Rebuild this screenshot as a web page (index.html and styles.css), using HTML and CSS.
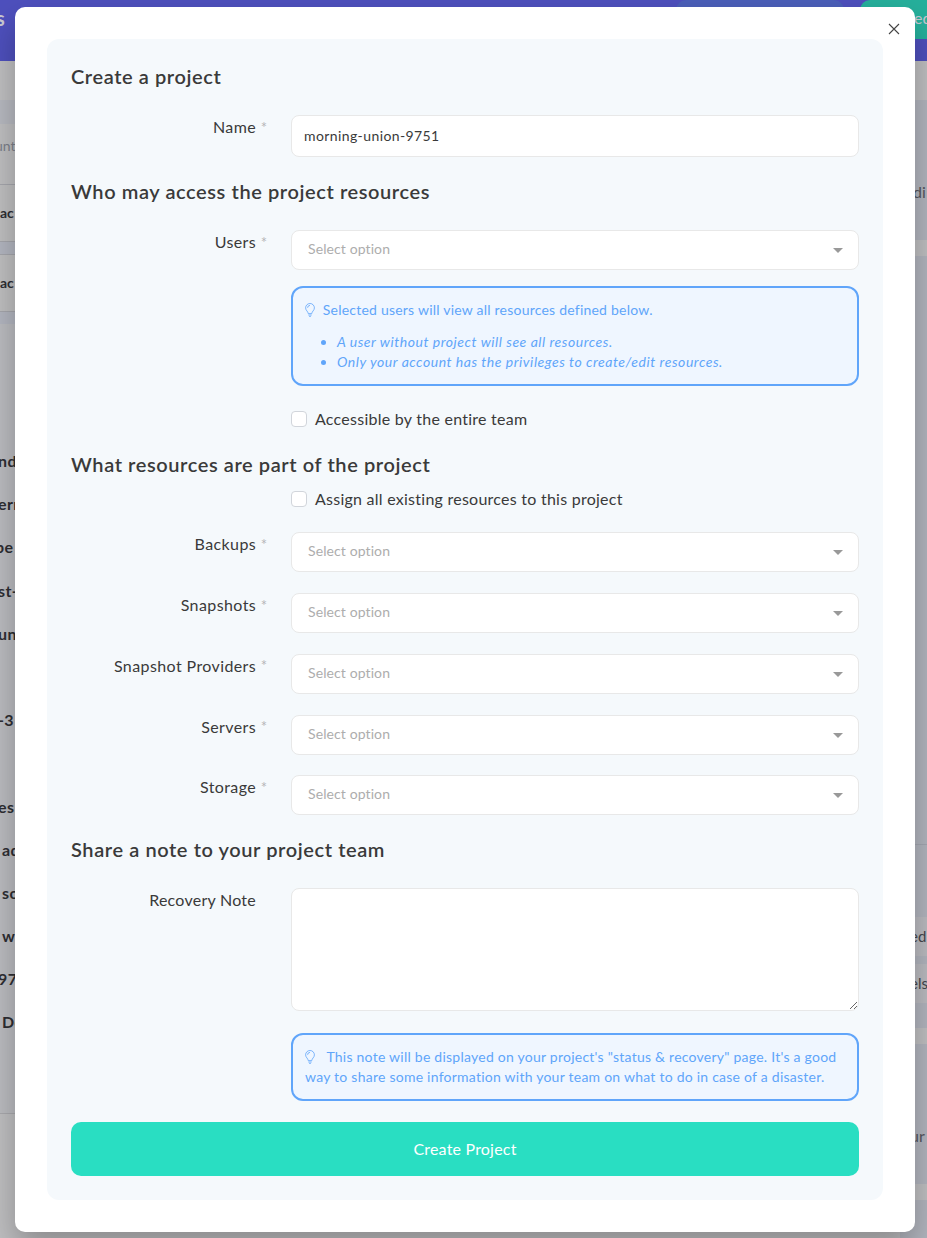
FILE: index.html
```html
<!DOCTYPE html>
<html lang="en">
<head>
    <meta charset="utf-8">
    <title>Create a project</title>
    <link rel="stylesheet" href="styles.css">
</head>
<body>
    <div class="page">
        <header class="topbar">
            <span class="brand">s</span>
            <span class="search"></span>
            <span class="connect">ed</span>
        </header>
        <div class="content">
            <div class="list">
                <div class="list-space"></div>
                <div class="list-filter">unt</div>
                <div class="cards">
                    <div class="card">ac</div>
                    <div class="card">ac</div>
                </div>
                <div class="rows">
                    <span>nd</span>
                    <span>err</span>
                    <span class="cut">pe</span>
                    <span>st-</span>
                    <span>un</span>
                    <span></span>
                    <span>-3</span>
                    <span></span>
                    <span>es</span>
                    <span class="indent">ad</span>
                    <span class="indent">so</span>
                    <span class="indent">w</span>
                    <span>97</span>
                    <span class="indent">De</span>
                </div>
            </div>
            <div class="side">
                <div class="side-box side-intro">di</div>
                <div class="side-box side-main">
                    <div class="side-links">
                        <span>ed</span>
                        <span>els</span>
                    </div>
                </div>
                <div class="side-box side-help">ur</div>
                <div class="side-box side-last"></div>
            </div>
        </div>
    </div>

    <div class="modal">
        <button class="close" aria-label="Close">
            <svg width="12" height="12" viewBox="0 0 12 12"><path d="M1 1l10 10M11 1L1 11"/></svg>
        </button>
        <form class="panel">
            <h2>Create a project</h2>
            <div class="row">
                <label for="name">Name <sup>*</sup></label>
                <input type="text" id="name" value="morning-union-9751">
            </div>

            <h2>Who may access the project resources</h2>
            <div class="row">
                <label>Users <sup>*</sup></label>
                <div>
                    <div class="select">Select option</div>
                    <div class="info info-users">
                        <p>
                            <svg class="bulb" width="10" height="14" viewBox="0 0 10 14"><path d="M3.2 10.6C3.2 8.5.6 7.5.6 4.9a4.4 4.4 0 0 1 8.8 0c0 2.6-2.6 3.6-2.6 5.7zM3.3 12h3.4M4.1 13.4h1.8M2.6 4.8A2.4 2.4 0 0 1 5 2.4"/></svg>
                            <span>Selected users will view all resources defined below.</span>
                        </p>
                        <ul>
                            <li>A user without project will see all resources.</li>
                            <li>Only your account has the privileges to create/edit resources.</li>
                        </ul>
                    </div>
                    <label class="check check-team"><input type="checkbox"> <span>Accessible by the entire team</span></label>
                </div>
            </div>

            <h2 class="tight">What resources are part of the project</h2>
            <div class="row row-assign">
                <span></span>
                <label class="check"><input type="checkbox"> <span>Assign all existing resources to this project</span></label>
            </div>
            <div class="row">
                <label>Backups <sup>*</sup></label>
                <div class="select">Select option</div>
            </div>
            <div class="row">
                <label>Snapshots <sup>*</sup></label>
                <div class="select">Select option</div>
            </div>
            <div class="row">
                <label>Snapshot Providers <sup>*</sup></label>
                <div class="select">Select option</div>
            </div>
            <div class="row">
                <label>Servers <sup>*</sup></label>
                <div class="select">Select option</div>
            </div>
            <div class="row">
                <label>Storage <sup>*</sup></label>
                <div class="select">Select option</div>
            </div>

            <h2>Share a note to your project team</h2>
            <div class="row">
                <label class="optional" for="note">Recovery Note</label>
                <div>
                    <textarea id="note"></textarea>
                    <div class="info info-note">
                        <svg class="bulb" width="10" height="14" viewBox="0 0 10 14"><path d="M3.2 10.6C3.2 8.5.6 7.5.6 4.9a4.4 4.4 0 0 1 8.8 0c0 2.6-2.6 3.6-2.6 5.7zM3.3 12h3.4M4.1 13.4h1.8M2.6 4.8A2.4 2.4 0 0 1 5 2.4"/></svg>
                        <span>This note will be displayed on your project's "status &amp; recovery" page. It's a good</span><br>
                        <span>way to share some information with your team on what to do in case of a disaster.</span>
                    </div>
                </div>
            </div>
            <button type="button" class="submit">Create Project</button>
        </form>
    </div>
</body>
</html>
```

FILE: styles.css
```css
* {
    box-sizing: border-box;
}

body {
    margin: 0;
    position: relative;
    height: 1238px;
    overflow: hidden;
    font-family: Lato, "Open Sans", sans-serif;
    font-size: 16px;
    line-height: 24px;
    color: #3a3a3a;
}

h2, p, ul {
    margin: 0;
}

/* page behind the modal */
.page {
    height: 1238px;
    overflow: hidden;
    background: #bfbfc1;
}

.topbar {
    display: flex;
    height: 61px;
    background: #4e50bd;
    color: #c9c9d2;
}

.brand {
    flex: none;
    width: 680px;
    margin-left: -4px;
    padding-top: 6px;
    font-size: 20px;
    font-weight: 700;
}

.search {
    flex: none;
    width: 168px;
    height: 39px;
    border-radius: 10px;
    background: #4b5fb9;
}

.connect {
    flex: none;
    width: 67px;
    height: 39px;
    margin-left: 16px;
    padding: 6px 0 0 54px;
    border-radius: 10px 0 0 0;
    background: #26b09c;
}

.content {
    display: grid;
    grid-template-columns: 1fr 27px;
    padding-top: 39px;
}

.list {
    font-size: 14px;
    font-weight: 700;
    color: #2e2e33;
}

.list-space {
    height: 24px;
    background: #b7b9c0;
}

.list-filter {
    height: 60px;
    padding-top: 10px;
    margin-left: -5px;
    font-weight: 400;
    color: #7c7f8a;
}

.cards {
    height: 140px;
    background: #b3b6c0;
}

.card {
    height: 58px;
    margin-bottom: 12px;
    padding-top: 16px;
    border-top: 1px solid #a5a6ac;
    border-bottom: 1px solid #a5a6ac;
    background: #bfbfc0;
}

.rows {
    height: 790px;
    padding-top: 115px;
    border-bottom: 1px solid #a9a9ad;
    background: #bbbcc0;
    font-size: 16px;
    letter-spacing: 0.4px;
}

.rows span {
    display: block;
    height: 43.2px;
    margin-left: -2px;
    padding-top: 10px;
}

.rows .cut {
    margin-left: -5px;
}

.rows .indent {
    margin-left: 2px;
}

.side {
    display: flex;
    flex-direction: column;
    gap: 16px;
    color: #56575e;
}

.side-box {
    padding-left: 13px;
    background: #b2b5be;
}

.side-intro {
    height: 140px;
    padding-top: 80px;
}

.side-main {
    height: 772px;
    padding-top: 588px;
    color: #45464c;
    font-size: 15px;
}

.side-links {
    margin-left: -13px;
    padding-top: 72px;
    border-top: 1px solid #a4a7b1;
}

.side-links span {
    display: block;
    height: 39px;
    margin-bottom: 8px;
    padding: 7px 0 0 10px;
    background: #bbbbc0;
}

.side-help {
    height: 140px;
    padding-top: 80px;
    padding-left: 10px;
}

.side-last {
    height: 60px;
}

/* modal */
.modal {
    position: absolute;
    top: 7px;
    left: 15px;
    width: 900px;
    height: 1225px;
    padding: 32px;
    border-radius: 10px;
    background: #fff;
    box-shadow: 0 16px 32px rgba(0, 0, 0, 0.27);
}

.close {
    position: absolute;
    top: 16px;
    right: 15px;
    width: 12px;
    height: 12px;
    padding: 0;
    border: none;
    background: none;
    line-height: 0;
}

.close svg {
    fill: none;
    stroke: #444;
    stroke-width: 1.1;
}

.panel {
    height: 1161px;
    padding: 23px 24px;
    border-radius: 12px;
    background: #f5f9fc;
}

h2 {
    margin: 20px 0 25px;
    font-size: 20px;
    font-weight: 600;
    line-height: 28px;
    letter-spacing: 0.59px;
}

h2:first-child {
    margin-top: 0;
}

h2.tight {
    margin: 19px 0 9px;
}

.row {
    display: grid;
    grid-template-columns: 195px 568px;
    column-gap: 25px;
}

.row + .row {
    margin-top: 20.8px;
}

.row-assign {
    margin-bottom: 21.2px;
}

.row-assign + .row {
    margin-top: 0;
}

.row > label:first-child {
    text-align: right;
    letter-spacing: 0.4px;
}

.row > label.optional {
    padding-right: 10px;
    letter-spacing: 0.25px;
}

sup {
    position: relative;
    top: 6px;
    font-size: 15px;
    line-height: 0;
    letter-spacing: -1px;
    color: #b5b5b8;
}

input[type=text], textarea, .select {
    display: block;
    width: 100%;
    border: 1px solid #e8e8e8;
    border-radius: 8px;
    background: #fff;
}

input[type=text] {
    height: 42px;
    padding: 0 12px 2px;
    font: 14px Lato, "Open Sans", sans-serif;
    letter-spacing: 0.4px;
    color: #3a3a3a;
}

.select {
    position: relative;
    height: 40px;
    padding: 6px 16px;
    font-size: 14px;
    letter-spacing: 0.1px;
    color: #adadad;
}

.select::after {
    content: "";
    position: absolute;
    top: 17px;
    right: 15px;
    border: 5px solid transparent;
    border-top-color: #999;
    border-bottom: 0;
}

textarea {
    height: 123px;
}

.info {
    border: 2px solid #60a5fa;
    border-radius: 12px;
    background: #eff6ff;
    padding: 12px;
    font-size: 14px;
    line-height: 20px;
    color: #60a5fa;
    white-space: nowrap;
}

.info-users {
    height: 100px;
    margin-top: 16px;
}

.info-users p {
    letter-spacing: 0.22px;
}

.info-users ul {
    margin-top: 12px;
    padding-left: 32px;
    font-style: italic;
    letter-spacing: 0.54px;
}

.info-note {
    height: 68px;
    margin-top: 22px;
    letter-spacing: 0.24px;
}

.bulb {
    margin-right: 4px;
    vertical-align: -2px;
    fill: none;
    stroke: #60a5fa;
    stroke-width: 0.8;
}

.info-note .bulb {
    margin-right: 8px;
}

.check {
    display: flex;
    align-items: center;
    gap: 8px;
    letter-spacing: 0.25px;
}

.check-team {
    margin-top: 21px;
}

.check input {
    appearance: none;
    width: 16px;
    height: 16px;
    margin: 0;
    border: 1px solid #d1d5db;
    border-radius: 4px;
    background: #fff;
}

.submit {
    display: block;
    width: 100%;
    height: 54px;
    margin-top: 21px;
    padding: 0 0 2px;
    border: none;
    border-radius: 10px;
    background: #29dec2;
    color: #fff;
    font: 16px Lato, "Open Sans", sans-serif;
    letter-spacing: 0.2px;
}
```
